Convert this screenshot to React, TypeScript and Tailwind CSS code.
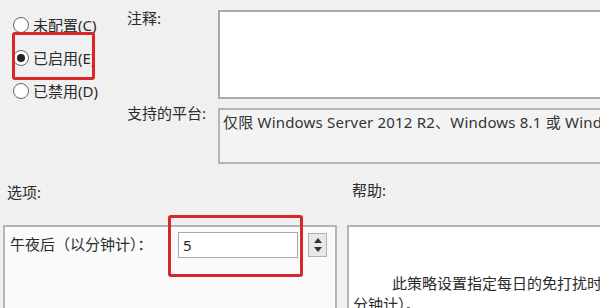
import React from 'react';

const font = { fontFamily: '"Noto Sans", "Noto Sans CJK SC", sans-serif' };

const Radio: React.FC<{ label: string; checked?: boolean }> = ({ label, checked }) => (
  <div className="flex items-center h-[33px] gap-[4px]">
    <span className="w-[16px] h-[16px] rounded-full border border-[#666] bg-white flex items-center justify-center shrink-0">
      {checked && <span className="w-[8px] h-[8px] rounded-full bg-[#222]" />}
    </span>
    <span className="text-[15px] leading-[20px] text-[#2b2b2b] whitespace-nowrap">{label}</span>
  </div>
);

export default function App() {
  return (
    <div className="relative w-[600px] h-[308px] overflow-hidden bg-[#f0f0f0] text-[#2b2b2b]" style={font}>
      {/* top: state radios + comment / platform */}
      <div className="flex h-[180px]">
        <div className="w-[127px] shrink-0 pl-[13px] pt-[8px]">
          <Radio label="未配置(C)" />
          <Radio label="已启用(E)" checked />
          <Radio label="已禁用(D)" />
        </div>

        <div className="flex flex-col">
          <div className="flex pt-[10px]">
            <div className="w-[91px] shrink-0 -mt-[2px] text-[15px] leading-[20px]">注释:</div>
            <div className="w-[400px] h-[89px] shrink-0 border-2 border-[#a9a9a9] bg-white" />
          </div>
          <div className="flex mt-[9px]">
            <div className="w-[91px] shrink-0 -mt-[5px] text-[15px] leading-[20px] whitespace-nowrap">支持的平台:</div>
            <div className="w-[400px] h-[56px] shrink-0 border-2 border-[#b4b4b4] bg-[#f3f3f3] pl-[3px] pt-[2px]">
              <div className="text-[15px] leading-[20px] tracking-[0.2px] whitespace-nowrap text-[#333]">
                仅限 Windows Server 2012 R2、Windows 8.1 或 Windows RT 8.1
              </div>
            </div>
          </div>
        </div>
      </div>

      {/* bottom: options / help */}
      <div className="flex">
        <div className="w-[340px] shrink-0 pl-[3px]">
          <div className="pl-[4px] mt-[2px] text-[15px] leading-[20px]">选项:</div>
          <div className="mt-[23px] w-[334px] h-[100px] border-2 border-[#b4b4b4] bg-[#fafafa] pl-[5px] pt-[5px]">
            <div className="flex items-center">
              <div className="w-[168px] shrink-0 mb-[3px] text-[15px] leading-[20px] whitespace-nowrap">午夜后（以分钟计）：</div>
              <div className="w-[120px] h-[26px] shrink-0 border border-[#a9a9a9] bg-white pl-[4px] text-[15px] leading-[24px]">5</div>
              <div className="ml-[10px] w-[19px] h-[24px] border border-[#b0b0b0] bg-[#e8e8e8] flex flex-col items-center justify-center gap-[4px]">
                <span className="w-0 h-0 border-l-[4px] border-r-[4px] border-b-[5px] border-l-transparent border-r-transparent border-b-[#333]" />
                <span className="w-0 h-0 border-l-[4px] border-r-[4px] border-t-[5px] border-l-transparent border-r-transparent border-t-[#333]" />
              </div>
            </div>
          </div>
        </div>

        <div className="pl-[7px]">
          <div className="pl-[5px] text-[15px] leading-[20px]">帮助:</div>
          <div className="mt-[25px] w-[300px] h-[100px] border-2 border-[#b4b4b4] bg-white pl-[4px] pt-[46px] text-[15px] leading-[21px] whitespace-nowrap">
            <div className="indent-[39px]">此策略设置指定每日的免打扰时间开始时间（以</div>
            <div>分钟计）。</div>
          </div>
        </div>
      </div>

      {/* red annotation frames */}
      <div className="absolute left-[12px] top-[32px] w-[83px] h-[48px] border-[3px] border-[#d8262a] rounded-[3px]" />
      <div className="absolute left-[168px] top-[215px] w-[135px] h-[62px] border-[3px] border-[#d8262a] rounded-[3px]" />
    </div>
  );
}
